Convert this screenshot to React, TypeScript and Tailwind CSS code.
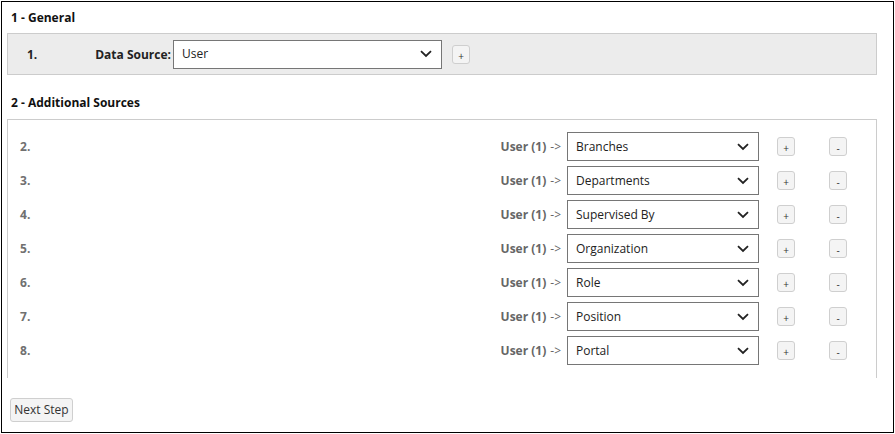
import React from "react";

const Chevron = () => (
  <svg width="12" height="8" viewBox="0 0 12 8" className="shrink-0">
    <polyline points="1,1.2 6,6 11,1.2" fill="none" stroke="#222" strokeWidth="1.8" />
  </svg>
);

const Select = ({ value, w }: { value: string; w: string }) => (
  <div
    className={`${w} h-[29px] bg-white border border-[#767676] flex items-center justify-between pl-[8px] pr-[9px] text-[12px] text-[#222]`}
  >
    <span>{value}</span>
    <Chevron />
  </div>
);

const SmallBtn = ({ label }: { label: string }) => (
  <div className="w-[18px] h-[19px] rounded-[3px] border border-[#cfcfcf] bg-[#f4f4f4] flex items-end justify-center pb-[1px] text-[10px] leading-[12px] text-[#333]">
    {label}
  </div>
);

const rows = [
  "Branches",
  "Departments",
  "Supervised By",
  "Organization",
  "Role",
  "Position",
  "Portal",
];

export default function App() {
  return (
    <div className="w-[895px] h-[434px] p-[1px] bg-white" style={{ fontFamily: '"Open Sans", "Noto Sans", sans-serif' }}>
      <div className="w-[893px] h-[432px] border border-black flex flex-col">
        <div className="pl-[9px] pt-[7px] h-[31px] text-[12px] font-bold text-[#111]">1 - General</div>
        <div className="ml-[5px] w-[870px] h-[42px] bg-[#ececec] border border-[#cccccc] flex items-center">
          <div className="w-[163px] pl-[19px] pt-[1px] text-[12px] font-bold text-[#222] flex">
            <span>1.</span>
            <span className="ml-auto">Data Source:</span>
          </div>
          <div className="ml-[2px]">
            <Select value="User" w="w-[269px]" />
          </div>
          <div className="ml-[10px]">
            <SmallBtn label="+" />
          </div>
        </div>
        <div className="pl-[9px] pt-[19px] h-[44px] text-[12px] font-bold text-[#111]">2 - Additional Sources</div>
        <div className="ml-[5px] w-[870px] h-[259px] border-t border-l border-r border-[#cccccc] pt-[12px] flex flex-col gap-[5px]">
          {rows.map((r, i) => (
            <div key={r} className="h-[29px] flex items-center pl-[12px]">
              <span className="text-[12px] font-bold text-[#707070]">{i + 2}.</span>
              <div className="ml-auto flex items-center text-[12px] text-[#666]">
                <span className="font-bold">User (1)</span>
                <span className="ml-[4px] mr-[6px]">-&gt;</span>
              </div>
              <Select value={r} w="w-[192px]" />
              <div className="ml-[18px]">
                <SmallBtn label="+" />
              </div>
              <div className="ml-[34px] mr-[29px]">
                <SmallBtn label="-" />
              </div>
            </div>
          ))}
        </div>
        <div className="pl-[8px] pt-[20px]">
          <div className="w-[63px] h-[24px] rounded-[3px] border border-[#cfcfcf] bg-[#f4f4f4] flex items-center justify-center text-[12px] text-[#333]">
            Next Step
          </div>
        </div>
      </div>
    </div>
  );
}
